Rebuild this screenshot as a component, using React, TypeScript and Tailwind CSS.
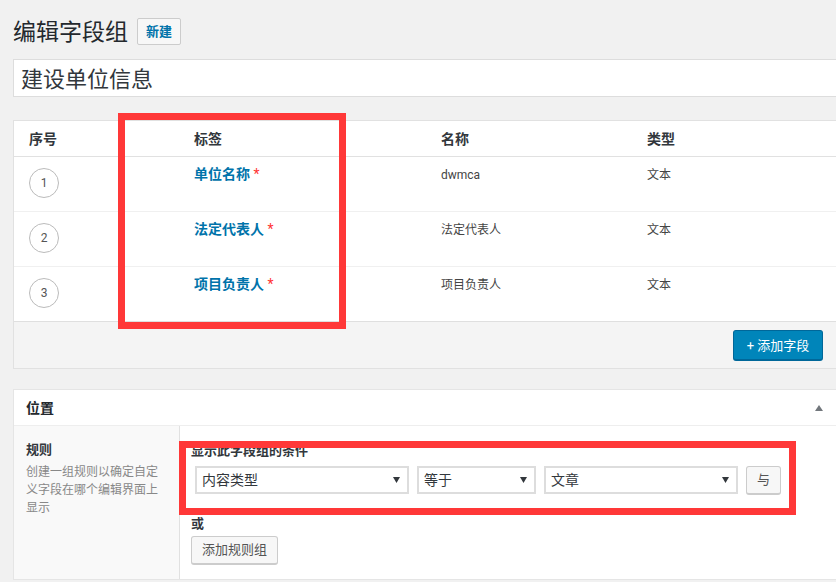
const rows = [
  { no: 1, label: '单位名称', name: 'dwmca', type: '文本' },
  { no: 2, label: '法定代表人', name: '法定代表人', type: '文本' },
  { no: 3, label: '项目负责人', name: '项目负责人', type: '文本' },
]

function Caret() {
  return (
    <svg width="7" height="6" viewBox="0 0 7 6" className="shrink-0">
      <path d="M0 0H7L3.5 6Z" fill="#32373c" />
    </svg>
  )
}

function Select({ value, className }: { value: string; className: string }) {
  return (
    <div className={`flex h-[28px] items-center justify-between border-2 border-[#ddd] bg-white pl-[5px] pr-[7px] text-[14px] text-[#32373c] ${className}`}>
      <span>{value}</span>
      <Caret />
    </div>
  )
}

export default function App() {
  return (
    <div className="relative h-[582px] w-[836px] overflow-hidden bg-[#f1f1f1] font-['Roboto','Noto_Sans_CJK_SC',sans-serif] text-[13px] text-[#444]">
      <div className="w-[860px] pl-[13px]">
        {/* Title */}
        <div className="flex h-[59px] items-start pt-[18px]">
          <h1 className="text-[23px] leading-[29px] text-[#23282d]">编辑字段组</h1>
          <button className="ml-[9px] h-[27px] w-[44px] rounded-[2px] border border-[#ccc] bg-[#f7f7f7] text-[13px] font-semibold leading-[25px] text-[#0073aa]">新建</button>
        </div>
        <div className="flex h-[38px] items-center border border-[#ddd] bg-white pl-[7px] pt-[2px] text-[22px] text-[#32373c]">建设单位信息</div>

        {/* Fields table */}
        <div className="mt-[23px] border border-[#e1e1e1] bg-white">
          <div className="grid h-[36px] grid-cols-[180px_247px_206px_1fr] items-center border-b border-[#e1e1e1] pt-[1px] text-[14px] font-semibold text-[#32373c]">
            <div className="pl-[15px]">序号</div>
            <div>标签</div>
            <div>名称</div>
            <div>类型</div>
          </div>
          {rows.map((row, i) => (
            <div key={row.no} className={`grid grid-cols-[180px_247px_206px_1fr] pt-[8px] text-[12px] leading-[20px] ${i < 2 ? 'h-[55px] border-b border-[#f0f0f0]' : 'h-[54px]'}`}>
              <div className="pl-[15px] pt-[3px]">
                <div className="flex h-[30px] w-[30px] items-center justify-center rounded-full border border-[#bbb] text-[12px] text-[#555]">{row.no}</div>
              </div>
              <div className="text-[14px] font-semibold leading-[18px] text-[#0073aa]">
                {row.label} <span className="font-normal text-[#f33]">*</span>
              </div>
              <div>{row.name}</div>
              <div>{row.type}</div>
            </div>
          ))}
          <div className="flex h-[47px] items-start border-t border-[#dfdfdf] bg-[#f4f4f4] pl-[719px] pt-[8px]">
            <button className="h-[31px] w-[90px] rounded-[3px] border border-b-2 border-[#006799] bg-[#0085ba] text-[13px] leading-[27px] text-white">+ 添加字段</button>
          </div>
        </div>

        {/* Location box */}
        <div className="mt-[20px] border border-[#e5e5e5] bg-white">
          <div className="flex h-[36px] items-center justify-between border-b border-[#eee] pl-[12px] pr-[36px] pt-[1px]">
            <span className="text-[14px] font-semibold text-[#23282d]">位置</span>
            <svg width="8" height="6" viewBox="0 0 8 6">
              <path d="M0 6H8L4 0Z" fill="#72777c" />
            </svg>
          </div>
          <div className="flex h-[153px]">
            <div className="w-[166px] shrink-0 border-r border-[#e1e1e1] bg-[#f9f9f9] pl-[12px] pr-[20px] pt-[14px]">
              <div className="font-semibold leading-[20px] text-[#32373c]">规则</div>
              <p className="mt-[3px] text-[12px] leading-[18px] text-[#888]">创建一组规则以确定自定义字段在哪个编辑界面上显示</p>
            </div>
            <div className="pl-[11px] pt-[16px]">
              <div className="font-semibold leading-[17px] text-[#32373c]">显示此字段组的条件</div>
              <div className="ml-[4px] mt-[7px] flex items-start">
                <Select value="内容类型" className="w-[214px]" />
                <Select value="等于" className="ml-[8px] w-[119px]" />
                <Select value="文章" className="ml-[8px] w-[194px]" />
                <button className="ml-[8px] h-[29px] w-[35px] rounded-[3px] border border-b-2 border-[#ccc] bg-[#f7f7f7] text-[13px] text-[#555]">与</button>
              </div>
              <div className="mt-[20px] font-semibold leading-[17px] text-[#32373c]">或</div>
              <button className="mt-[4px] h-[29px] w-[87px] rounded-[3px] border border-b-2 border-[#ccc] bg-[#f7f7f7] text-[13px] text-[#555]">添加规则组</button>
            </div>
          </div>
        </div>
      </div>

      {/* Red annotation boxes drawn on top of the screenshot */}
      <div className="absolute left-[118px] top-[113px] h-[216px] w-[228px] border-[7px] border-[#ff3838]" />
      <div className="absolute left-[179px] top-[441px] h-[74px] w-[617px] border-[7px] border-[#ff3838]" />
    </div>
  )
}
